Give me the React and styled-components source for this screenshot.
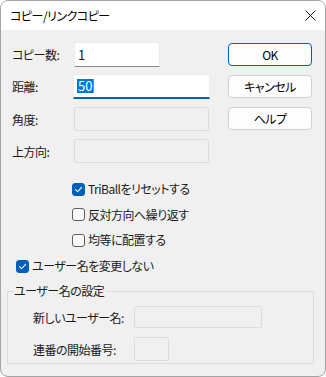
import React from "react";
import styled, { createGlobalStyle } from "styled-components";

const GlobalStyle = createGlobalStyle`
  html, body {
    margin: 0;
    padding: 0;
    background: #ffffff;
  }
  * {
    box-sizing: border-box;
  }
  body {
    font-family: "Noto Sans CJK JP", "Noto Sans", sans-serif;
    font-size: 12px;
    color: #1a1a1a;
    font-feature-settings: "palt" 1;
    letter-spacing: -0.5px;
  }
`;

const Window = styled.div`
  width: 326px;
  height: 377px;
  border: 1px solid #a3a3a3;
  border-radius: 8px;
  overflow: hidden;
  background: #f0f0f0;
  display: flex;
  flex-direction: column;
`;

const TitleBar = styled.div`
  height: 29px;
  flex: none;
  background: #ffffff;
  display: flex;
  align-items: center;
  justify-content: space-between;
  padding: 0 9px 0 9px;
`;

const Title = styled.span`
  font-size: 12px;
  line-height: 16px;
  color: #000;
`;

const CloseButton = styled.div`
  width: 12px;
  height: 12px;
  display: flex;
  align-items: center;
  justify-content: center;
`;

const Body = styled.div`
  flex: 1;
  padding: 12px 0 0 11px;
  display: flex;
  flex-direction: column;
`;

const TopSection = styled.div`
  display: flex;
`;

const Fields = styled.div`
  width: 216px;
  display: flex;
  flex-direction: column;
`;

const FieldRow = styled.div`
  display: flex;
  align-items: center;
  height: ${(p) => p.$h}px;
  margin-top: ${(p) => p.$mt || 0}px;
`;

const Label = styled.span`
  width: ${(p) => p.$w || 62}px;
  flex: none;
  line-height: 16px;
  padding-top: 1px;
`;

const TextInput = styled.div`
  width: ${(p) => p.$w}px;
  height: 100%;
  background: #ffffff;
  border: 1px solid #ececec;
  border-bottom: ${(p) => (p.$focused ? "2px solid #005fb8" : "1px solid #8a8a8a")};
  border-radius: 3px 3px 0 0;
  display: flex;
  align-items: center;
  padding-left: 3px;
  line-height: 16px;
  font-size: 13px;
  letter-spacing: 0;
`;

const DisabledBox = styled.div`
  width: ${(p) => p.$w}px;
  height: ${(p) => p.$h || 24}px;
  border: 1px solid #dcdcdc;
  border-radius: 2px;
  background: #f0f0f0;
`;

const Selected = styled.span`
  background: #0078d7;
  color: #ffffff;
  padding: 0 1px;
  line-height: 14px;
  border-right: 1px solid #e0701f;
`;

const Buttons = styled.div`
  padding-top: 1px;
  display: flex;
  flex-direction: column;
  gap: 9px;
`;

const Button = styled.div`
  width: 84px;
  height: 23px;
  background: #fdfdfd;
  border: 1px solid ${(p) => (p.$primary ? "#005fb8" : "#d0d0d0")};
  border-radius: 4px;
  display: flex;
  align-items: center;
  justify-content: center;
  line-height: 16px;
  color: #000;
`;

const CheckList = styled.div`
  margin-top: 13px;
  display: flex;
  flex-direction: column;
`;

const CheckRow = styled.div`
  display: flex;
  align-items: center;
  height: ${(p) => p.$h}px;
  padding-left: ${(p) => p.$indent}px;
  gap: 3px;
  line-height: 16px;
`;

const Box = styled.div`
  width: 13px;
  height: 13px;
  flex: none;
  border-radius: 3px;
  background: ${(p) => (p.$checked ? "#005fb8" : "#fbfbfb")};
  border: 1px solid ${(p) => (p.$checked ? "#005fb8" : "#5e5e5e")};
  display: flex;
  align-items: center;
  justify-content: center;
`;

const Group = styled.fieldset`
  margin: 4px 0 0 -5px;
  width: 307px;
  height: 81px;
  padding: 0;
  border: 1px solid #dcdcdc;
`;

const Legend = styled.legend`
  margin-left: 5px;
  padding: 0 2px 0 1px;
  line-height: 16px;
`;

const GroupBody = styled.div`
  padding: 7px 0 0 25px;
  display: flex;
  flex-direction: column;
`;

const GroupRow = styled.div`
  display: flex;
  align-items: center;
  height: ${(p) => p.$h}px;
  margin-top: ${(p) => p.$mt || 0}px;
`;

function Check({ checked }) {
  return (
    <Box $checked={checked}>
      {checked && (
        <svg width="9" height="9" viewBox="0 0 9 9">
          <path d="M1.5 4.6 L3.6 6.6 L7.6 2.4" fill="none" stroke="#fff" strokeWidth="1.1" strokeLinecap="round" strokeLinejoin="round" />
        </svg>
      )}
    </Box>
  );
}

export default function App() {
  return (
    <>
      <GlobalStyle />
      <Window>
        <TitleBar>
          <Title>コピー/リンクコピー</Title>
          <CloseButton>
            <svg width="11" height="11" viewBox="0 0 11 11">
              <path d="M0.5 0.5 L10.5 10.5 M10.5 0.5 L0.5 10.5" stroke="#1a1a1a" strokeWidth="1" />
            </svg>
          </CloseButton>
        </TitleBar>
        <Body>
          <TopSection>
            <Fields>
              <FieldRow $h={25}>
                <Label>コピー数:</Label>
                <TextInput $w={86}>1</TextInput>
              </FieldRow>
              <FieldRow $h={25} $mt={7}>
                <Label $w={61}>距離:</Label>
                <TextInput $w={137} $focused>
                  <Selected>50</Selected>
                </TextInput>
              </FieldRow>
              <FieldRow $h={24} $mt={8}>
                <Label>角度:</Label>
                <DisabledBox $w={135} />
              </FieldRow>
              <FieldRow $h={24} $mt={8}>
                <Label>上方向:</Label>
                <DisabledBox $w={135} />
              </FieldRow>
            </Fields>
            <Buttons>
              <Button $primary>OK</Button>
              <Button>キャンセル</Button>
              <Button>ヘルプ</Button>
            </Buttons>
          </TopSection>
          <CheckList>
            <CheckRow $h={26} $indent={60}>
              <Check checked />
              TriBallをリセットする
            </CheckRow>
            <CheckRow $h={25} $indent={60}>
              <Check />
              反対方向へ繰り返す
            </CheckRow>
            <CheckRow $h={26} $indent={60}>
              <Check />
              均等に配置する
            </CheckRow>
            <CheckRow $h={26} $indent={4}>
              <Check checked />
              ユーザー名を変更しない
            </CheckRow>
          </CheckList>
          <Group>
            <Legend>ユーザー名の設定</Legend>
            <GroupBody>
              <GroupRow $h={22}>
                <Label $w={101}>新しいユーザー名:</Label>
                <DisabledBox $w={128} $h={22} />
              </GroupRow>
              <GroupRow $h={24} $mt={9}>
                <Label $w={101}>連番の開始番号:</Label>
                <DisabledBox $w={35} $h={24} />
              </GroupRow>
            </GroupBody>
          </Group>
        </Body>
      </Window>
    </>
  );
}
